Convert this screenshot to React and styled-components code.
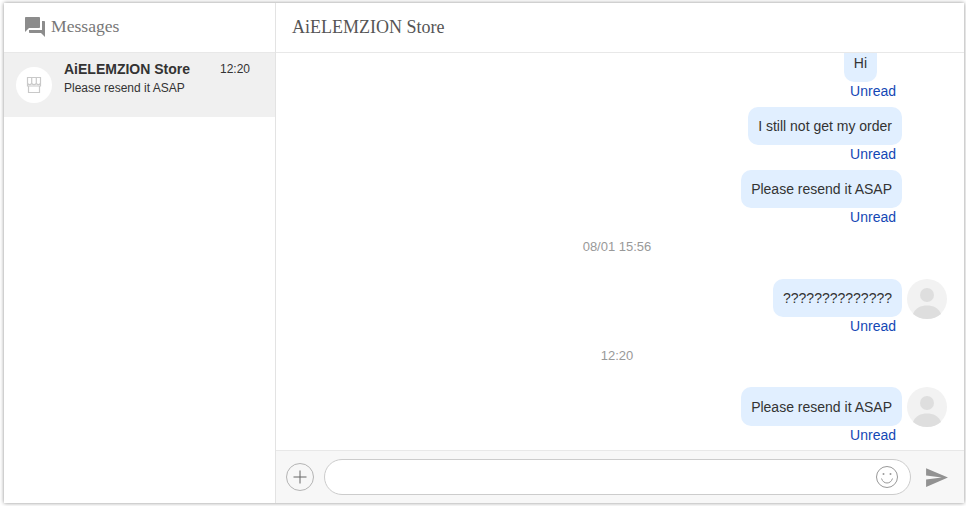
import React from 'react'
import styled, { createGlobalStyle } from 'styled-components'

const GlobalStyle = createGlobalStyle`
  html, body {
    margin: 0;
    height: 100%;
    background: #fff;
    overflow: hidden;
  }
  #root {
    height: 100%;
  }
`

const messages = [
  { id: 1, text: 'Hi', inset: true },
  { id: 2, text: 'I still not get my order' },
  { id: 3, text: 'Please resend it ASAP' },
  { id: 4, time: '08/01 15:56', gap: 46 },
  { id: 5, text: '??????????????', avatar: true },
  { id: 6, time: '12:20', gap: 45 },
  { id: 7, text: 'Please resend it ASAP', avatar: true, tall: true },
]

const App = () => {
  return (
    <Page>
      <GlobalStyle />
      <Panel>
        <Sidebar>
          <SideHeader>
            <svg width="24" height="24" viewBox="0 0 24 24" fill="#8c8c8c">
              <path d="M21 6h-2v9H6v2c0 .55.45 1 1 1h11l4 4V7c0-.55-.45-1-1-1zm-4 6V3c0-.55-.45-1-1-1H3c-.55 0-1 .45-1 1v14l4-4h10c.55 0 1-.45 1-1z" />
            </svg>
            <SideTitle>Messages</SideTitle>
          </SideHeader>
          <ChatItem>
            <StoreAvatar>
              <svg width="18" height="18" viewBox="0 0 18 18" fill="none" stroke="#c9c9c9" strokeWidth="1.2">
                <path d="M2.5 1.5h13v8.5h-13z" />
                <path d="M6.7 1.5v6M11.3 1.5v6M2.5 7.5c1.4 1.6 2.8 1.6 4.2 0 1.5 1.6 3.1 1.6 4.6 0 1.4 1.6 2.8 1.6 4.2 0" />
                <path d="M3.5 10v6.500h11V10" />
              </svg>
            </StoreAvatar>
            <ChatInfo>
              <ChatTop>
                <ChatName>AiELEMZION Store</ChatName>
                <ChatTime>12:20</ChatTime>
              </ChatTop>
              <ChatPreview>Please resend it ASAP</ChatPreview>
            </ChatInfo>
          </ChatItem>
        </Sidebar>
        <Main>
          <MainHeader>AiELEMZION Store</MainHeader>
          <MessageList>
            {messages.map((m) => {
              if (m.time) {
                return <TimeRow key={m.id} $gap={m.gap}>{m.time}</TimeRow>
              }
              return (
                <MessageRow key={m.id}>
                  <MessageBody>
                    <Bubble $inset={m.inset} $tall={m.tall}>{m.text}</Bubble>
                    <Status $tall={m.tall}>Unread</Status>
                  </MessageBody>
                  <AvatarSlot>
                    {m.avatar && (
                      <svg width="40" height="40" viewBox="0 0 40 40">
                        <circle cx="20" cy="20" r="20" fill="#f2f2f2" />
                        <circle cx="20" cy="16" r="7" fill="#dedede" />
                        <path d="M6 35c2-6 8-8.500 14-8.500s12 2.500 14 8.500c-3.500 3-8.500 5-14 5s-10.500-2-14-5z" fill="#dedede" />
                      </svg>
                    )}
                  </AvatarSlot>
                </MessageRow>
              )
            })}
          </MessageList>
          <InputBar>
            <IconButton>
              <svg width="28" height="28" viewBox="0 0 28 28" fill="none" stroke="#666">
                <circle cx="14" cy="14" r="13.500" stroke="#b4b4b4" />
                <path d="M14 7.500v13M7.500 14h13" />
              </svg>
            </IconButton>
            <InputBox>
              <svg width="24" height="24" viewBox="0 0 24 24" fill="none" stroke="#999">
                <circle cx="12" cy="12" r="10.500" />
                <path d="M6.500 13.500c1 3 3 4.500 5.500 4.500s4.500-1.500 5.500-4.500" />
                <circle cx="8.500" cy="9" r="1" fill="#999" stroke="none" />
                <circle cx="15.500" cy="9" r="1" fill="#999" stroke="none" />
              </svg>
            </InputBox>
            <SendButton>
              <svg width="25" height="25" viewBox="0 0 24 24" fill="#929292">
                <path d="M2.010 21L23 12 2.010 3 2 10l15 2-15 2z" />
              </svg>
            </SendButton>
          </InputBar>
        </Main>
      </Panel>
    </Page>
  )
}

const Page = styled.div`
  box-sizing: border-box;
  height: 506px;
  padding: 3px 2px 3px 4px;
  font-family: 'Liberation Sans', Arial, sans-serif;
`

const Panel = styled.div`
  height: 500px;
  display: flex;
  background: #fff;
  box-shadow: 0 0 4px rgba(0, 0, 0, 0.45);
`

const Sidebar = styled.div`
  width: 271px;
  flex-shrink: 0;
  border-right: 1px solid #e3e3e3;
`

const SideHeader = styled.div`
  box-sizing: border-box;
  height: 50px;
  padding: 0 0 2px 19px;
  display: flex;
  align-items: center;
  gap: 4px;
  border-bottom: 1px solid #e8e8e8;
`

const SideTitle = styled.span`
  font-family: 'Liberation Serif', 'Times New Roman', serif;
  font-size: 17.6px;
  color: #777;
`

const ChatItem = styled.div`
  height: 64px;
  padding-left: 12px;
  display: flex;
  align-items: center;
  gap: 12px;
  background: #f0f0f0;
`

const StoreAvatar = styled.div`
  width: 36px;
  height: 36px;
  border-radius: 50%;
  background: #fff;
  display: flex;
  align-items: center;
  justify-content: center;
`

const ChatInfo = styled.div`
  width: 186px;
  margin-top: -15px;
`

const ChatTop = styled.div`
  display: flex;
  justify-content: space-between;
  align-items: center;
  height: 17px;
`

const ChatName = styled.span`
  font-size: 14px;
  font-weight: 700;
  color: #333;
`

const ChatTime = styled.span`
  font-size: 12px;
  color: #333;
`

const ChatPreview = styled.div`
  margin-top: 4px;
  font-size: 12px;
  color: #333;
`

const Main = styled.div`
  flex: 1;
  min-width: 0;
  display: flex;
  flex-direction: column;
`

const MainHeader = styled.div`
  box-sizing: border-box;
  height: 50px;
  padding: 0 0 0 16px;
  display: flex;
  align-items: center;
  border-bottom: 1px solid #e8e8e8;
  font-family: 'Liberation Serif', 'Times New Roman', serif;
  font-size: 18px;
  color: #555;
`

const MessageList = styled.div`
  flex: 1;
  min-height: 0;
  padding-right: 17px;
  display: flex;
  flex-direction: column;
  justify-content: flex-end;
  overflow: hidden;
`

const MessageRow = styled.div`
  flex-shrink: 0;
  display: flex;
  justify-content: flex-end;
  gap: 5px;
`

const MessageBody = styled.div`
  display: flex;
  flex-direction: column;
  align-items: flex-end;
`

const Bubble = styled.div`
  box-sizing: border-box;
  height: ${(p) => (p.$tall ? '39px' : '38px')};
  padding: 0 10px;
  margin-right: ${(p) => (p.$inset ? '25px' : '0')};
  display: flex;
  align-items: center;
  border-radius: 10px;
  background: #e1efff;
  font-size: 14px;
  color: #333;
`

const Status = styled.div`
  height: ${(p) => (p.$tall ? '24px' : '25px')};
  line-height: 18px;
  margin-right: 6px;
  font-size: 14px;
  color: #1447b5;
`

const AvatarSlot = styled.div`
  width: 40px;
  height: 40px;
`

const TimeRow = styled.div`
  flex-shrink: 0;
  box-sizing: border-box;
  height: ${(p) => p.$gap}px;
  padding: 6px 0 0 11px;
  line-height: 16px;
  text-align: center;
  font-size: 13px;
  color: #999;
`

const InputBar = styled.div`
  box-sizing: border-box;
  height: 53px;
  padding: 8px 15px 8px 10px;
  display: flex;
  align-items: center;
  gap: 10px;
  border-top: 1px solid #e8e8e8;
  background: #f7f7f7;
`

const IconButton = styled.div`
  width: 28px;
  height: 28px;
  display: flex;
`

const InputBox = styled.div`
  box-sizing: border-box;
  flex: 1;
  height: 36px;
  padding-right: 11px;
  display: flex;
  align-items: center;
  justify-content: flex-end;
  border: 1px solid #ccc;
  border-radius: 18px;
  background: #fff;
`

const SendButton = styled.div`
  width: 25px;
  height: 25px;
  margin-left: 3px;
  display: flex;
`

export default App
